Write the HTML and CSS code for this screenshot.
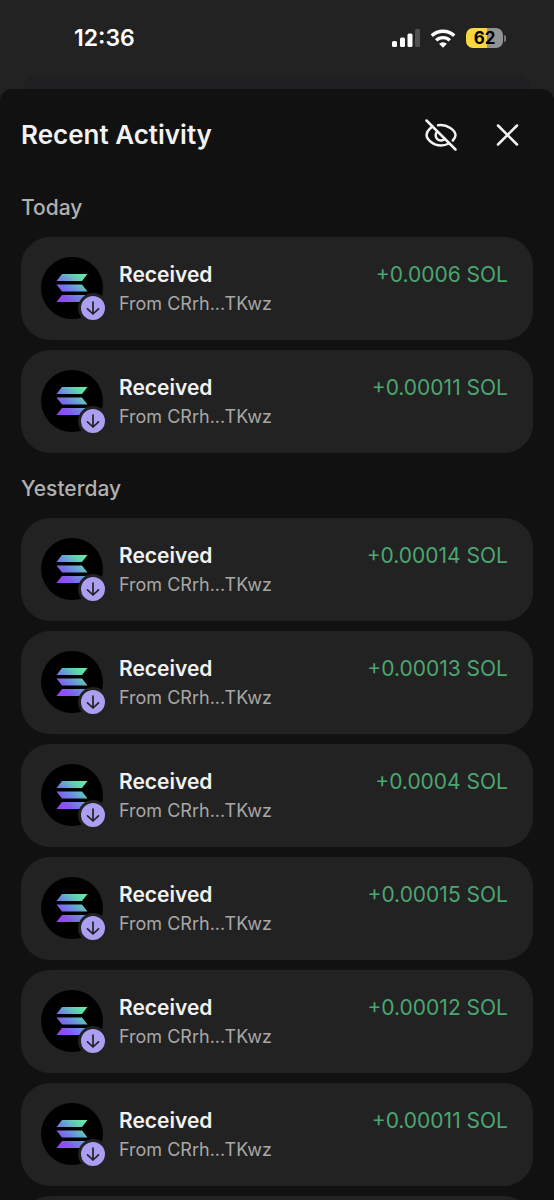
FILE: index.html
```html
<!DOCTYPE html>
<html lang="en">
<head>
<meta charset="utf-8">
<meta name="viewport" content="width=device-width, initial-scale=1">
<title>Recent Activity</title>
<link rel="stylesheet" href="styles.css">
</head>
<body>
<svg class="defs" aria-hidden="true">
  <defs>
    <linearGradient id="sol" gradientUnits="userSpaceOnUse" x1="3" y1="28" x2="29" y2="0">
      <stop offset="0" stop-color="#9945ff"/>
      <stop offset="0.2" stop-color="#8752f3"/>
      <stop offset="0.5" stop-color="#6a8fe0"/>
      <stop offset="0.75" stop-color="#60ccb4"/>
      <stop offset="1" stop-color="#64eea6"/>
    </linearGradient>
    <symbol id="sol-mark" viewBox="0 0 32 28">
      <path fill="url(#sol)" d="M6 0h25.500l-5.500 7H.5zM.5 10.500H26l5.500 7H6zM6 21h25.500l-5.500 7H.5z"/>
    </symbol>
    <symbol id="arrow-down" viewBox="0 0 24 24">
      <path fill="none" stroke="#222" stroke-width="1.700" stroke-linecap="round" stroke-linejoin="round" d="M12 6v12M6.500 12.800l5.500 5.200 5.500-5.200"/>
    </symbol>
  </defs>
</svg>
<div class="phone">
  <div class="status">
    <span class="clock">12:36</span>
    <div class="indicators">
      <svg class="signal" viewBox="0 0 28 18" aria-hidden="true">
        <rect x="0" y="12" width="5" height="6" rx="1.500" fill="#fff"/>
        <rect x="8" y="8.500" width="5" height="9.500" rx="1.500" fill="#fff"/>
        <rect x="15.500" y="4.500" width="5" height="13.500" rx="1.500" fill="#fff"/>
        <rect x="23" y="0" width="5" height="18" rx="1.500" fill="#505050"/>
      </svg>
      <svg class="wifi" viewBox="0 0 26 19" aria-hidden="true">
        <g fill="none" stroke="#fff" stroke-width="3.400">
          <path d="M1.800 6.800a16 16 0 0 1 22.400 0"/>
          <path d="M6.200 11.400a9.700 9.700 0 0 1 13.600 0"/>
        </g>
        <path fill="#fff" d="M13 18.800l-3.900-4a5.600 5.600 0 0 1 7.800 0z"/>
      </svg>
      <div class="battery"><span class="level">62</span><span class="cap"></span></div>
    </div>
  </div>
  <div class="behind"></div>
  <main class="sheet">
    <header class="head">
      <h1>Recent Activity</h1>
      <div class="actions">
        <button type="button" aria-label="Hide balances">
          <svg viewBox="0 0 32 32" fill="none" stroke="#f2f2f2" stroke-width="2.500" stroke-linecap="round" stroke-linejoin="round">
            <path d="M1.500 1.500l29 29"/>
            <path d="M6.500 8.300C3.600 10.600 1.600 14 1.600 16.300c0 3.500 6 10.200 14.400 10.200 3 0 5.600-.8 7.800-2"/>
            <path d="M13 6.300c9.500-1.500 17.500 5.500 17.500 10 0 1.600-1 3.500-2.700 5.200"/>
            <path d="M12 12.800a5.200 5.200 0 1 0 7.700 7"/>
          </svg>
        </button>
        <button type="button" aria-label="Close">
          <svg viewBox="0 0 32 32" fill="none" stroke="#f2f2f2" stroke-width="2.500" stroke-linecap="round">
            <path d="M6 6.500l19 19M25 6.500l-19 19"/>
          </svg>
        </button>
      </div>
    </header>
    <div class="feed">
      <section>
        <h2>Today</h2>
        <ul>
          <li class="card"><span class="coin"><svg class="mark"><use href="#sol-mark"/></svg><svg class="badge"><use href="#arrow-down"/></svg></span><div class="info"><span class="kind">Received</span><span class="from">From CRrh...TKwz</span></div><span class="amount">+0.0006 SOL</span></li>
          <li class="card"><span class="coin"><svg class="mark"><use href="#sol-mark"/></svg><svg class="badge"><use href="#arrow-down"/></svg></span><div class="info"><span class="kind">Received</span><span class="from">From CRrh...TKwz</span></div><span class="amount">+0.00011 SOL</span></li>
        </ul>
      </section>
      <section>
        <h2>Yesterday</h2>
        <ul>
          <li class="card"><span class="coin"><svg class="mark"><use href="#sol-mark"/></svg><svg class="badge"><use href="#arrow-down"/></svg></span><div class="info"><span class="kind">Received</span><span class="from">From CRrh...TKwz</span></div><span class="amount">+0.00014 SOL</span></li>
          <li class="card"><span class="coin"><svg class="mark"><use href="#sol-mark"/></svg><svg class="badge"><use href="#arrow-down"/></svg></span><div class="info"><span class="kind">Received</span><span class="from">From CRrh...TKwz</span></div><span class="amount">+0.00013 SOL</span></li>
          <li class="card"><span class="coin"><svg class="mark"><use href="#sol-mark"/></svg><svg class="badge"><use href="#arrow-down"/></svg></span><div class="info"><span class="kind">Received</span><span class="from">From CRrh...TKwz</span></div><span class="amount">+0.0004 SOL</span></li>
          <li class="card"><span class="coin"><svg class="mark"><use href="#sol-mark"/></svg><svg class="badge"><use href="#arrow-down"/></svg></span><div class="info"><span class="kind">Received</span><span class="from">From CRrh...TKwz</span></div><span class="amount">+0.00015 SOL</span></li>
          <li class="card"><span class="coin"><svg class="mark"><use href="#sol-mark"/></svg><svg class="badge"><use href="#arrow-down"/></svg></span><div class="info"><span class="kind">Received</span><span class="from">From CRrh...TKwz</span></div><span class="amount">+0.00012 SOL</span></li>
          <li class="card"><span class="coin"><svg class="mark"><use href="#sol-mark"/></svg><svg class="badge"><use href="#arrow-down"/></svg></span><div class="info"><span class="kind">Received</span><span class="from">From CRrh...TKwz</span></div><span class="amount">+0.00011 SOL</span></li>
          <li class="card"></li>
        </ul>
      </section>
    </div>
  </main>
</div>
</body>
</html>
```
FILE: styles.css
```css
* { box-sizing: border-box; }
body {
  margin: 0;
  background: #222;
  color: #f2f2f2;
  font-family: Inter, "Liberation Sans", sans-serif;
}
h1, h2, ul { margin: 0; padding: 0; }
ul { list-style: none; display: flex; flex-direction: column; gap: 10px; }
svg { display: block; }
.defs { position: absolute; width: 0; height: 0; }
.phone {
  height: 100vh;
  display: flex;
  flex-direction: column;
  overflow: hidden;
}
.status {
  display: flex;
  justify-content: space-between;
  align-items: center;
  height: 76px;
  padding: 0 48px 0 74px;
  color: #fff;
}
.clock { font-size: 23px; line-height: 28px; font-weight: 600; }
.indicators { display: flex; align-items: center; gap: 10px; }
.signal { width: 28px; height: 18px; }
.wifi { width: 26px; height: 19px; }
.battery { display: flex; align-items: center; gap: 1px; }
.level {
  width: 37px;
  border-radius: 7px;
  background: linear-gradient(90deg, #fbd63e 58%, #929292 58%);
  color: #000;
  font-size: 17px;
  line-height: 20px;
  font-weight: 700;
  text-align: center;
}
.cap { width: 2px; height: 7px; border-radius: 0 2px 2px 0; background: #777; }
.behind {
  flex: none;
  height: 13px;
  margin: 0 24px;
  border-radius: 12px 12px 0 0;
  background: #1f1f21;
}
.sheet {
  flex: 1;
  min-height: 0;
  display: flex;
  flex-direction: column;
  background: #111;
  border-radius: 12px 12px 0 0;
}
.head {
  display: flex;
  justify-content: space-between;
  align-items: center;
  padding: 26px 30px 0 21px;
}
h1 { font-size: 26px; line-height: 40px; font-weight: 600; }
.actions { display: flex; gap: 35px; }
button { padding: 0; border: 0; background: none; cursor: pointer; }
button svg { width: 32px; height: 32px; }
.feed { flex: 1; min-height: 0; overflow: hidden; padding: 37px 21px 0; }
h2 { font-size: 21px; line-height: 32px; font-weight: 500; padding-bottom: 13px; color: #b0b0b0; }
section + section { padding-top: 20px; }
.card {
  display: flex;
  min-height: 103px;
  padding: 20px 25px 20px 20px;
  border-radius: 29px;
  background: #222;
}
.coin {
  position: relative;
  display: grid;
  place-items: center;
  width: 62px;
  height: 62px;
  border-radius: 50%;
  background: #000;
}
.mark { width: 32px; height: 28px; }
.badge {
  position: absolute;
  right: -5px;
  bottom: -4px;
  width: 30px;
  height: 30px;
  border: 3px solid #222;
  border-radius: 50%;
  background: #ab9ff2;
}
.info { flex: 1; display: flex; flex-direction: column; padding-left: 16px; }
.kind { font-size: 21px; line-height: 36px; font-weight: 600; }
.from { font-size: 18px; line-height: 22px; color: #a8a8a8; }
.amount { font-size: 21px; line-height: 36px; color: #4ba671; }
```
